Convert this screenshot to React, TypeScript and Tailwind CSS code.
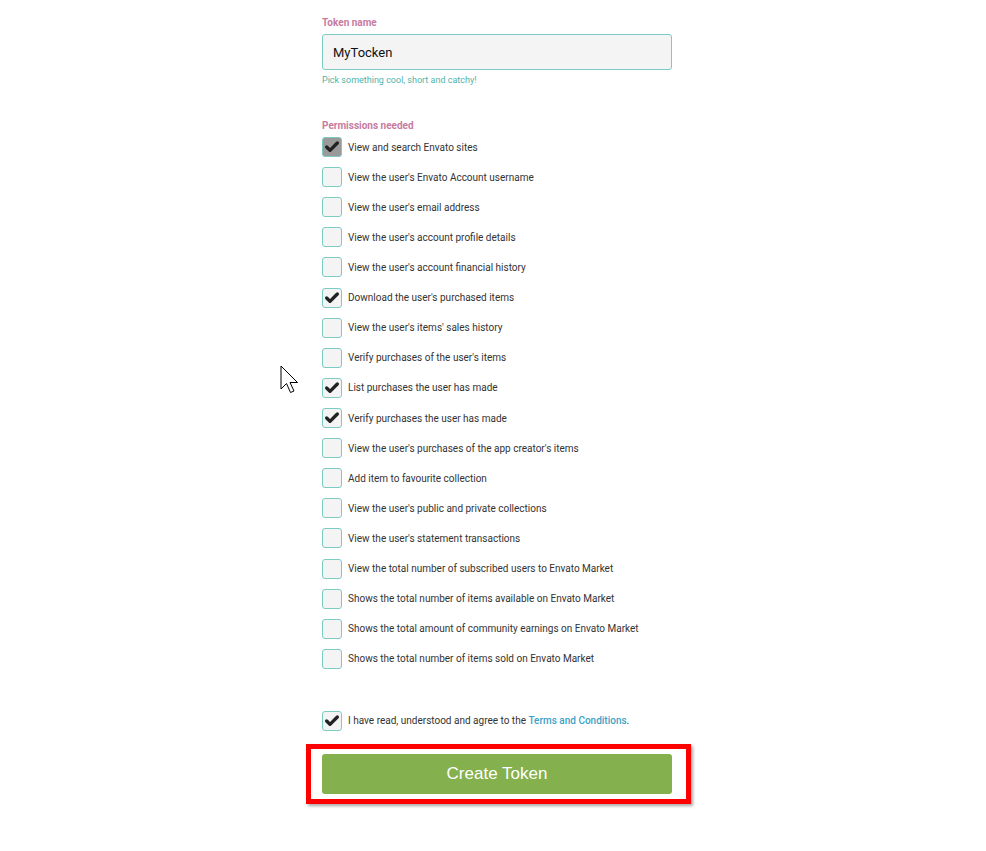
import { Check } from 'lucide-react';

const permissions: { label: string; checked?: boolean; disabled?: boolean }[] = [
  { label: 'View and search Envato sites', checked: true, disabled: true },
  { label: "View the user's Envato Account username" },
  { label: "View the user's email address" },
  { label: "View the user's account profile details" },
  { label: "View the user's account financial history" },
  { label: "Download the user's purchased items", checked: true },
  { label: "View the user's items' sales history" },
  { label: "Verify purchases of the user's items" },
  { label: 'List purchases the user has made', checked: true },
  { label: 'Verify purchases the user has made', checked: true },
  { label: "View the user's purchases of the app creator's items" },
  { label: 'Add item to favourite collection' },
  { label: "View the user's public and private collections" },
  { label: "View the user's statement transactions" },
  { label: 'View the total number of subscribed users to Envato Market' },
  { label: 'Shows the total number of items available on Envato Market' },
  { label: 'Shows the total amount of community earnings on Envato Market' },
  { label: 'Shows the total number of items sold on Envato Market' },
];

function Box({ checked, disabled }: { checked?: boolean; disabled?: boolean }) {
  return (
    <span
      className={`flex h-5 w-5 shrink-0 items-center justify-center rounded-[3px] border ${
        disabled ? 'border-[#7cc9c2] bg-[#9a9a9a]' : 'border-[#7cccc4] bg-[#f4f4f4]'
      }`}
    >
      {checked ? <Check className="h-4 w-4 text-[#222]" strokeWidth={5} /> : null}
    </span>
  );
}

export default function App() {
  return (
    <div className="relative min-h-[851px] bg-white font-['Roboto',sans-serif] text-[#333]">
      <div className="ml-[322px] w-[350px] pt-[16px]">
        <label className="block text-[10px] leading-[14px] font-bold text-[#c87b9f]">Token name</label>
        <input
          defaultValue="MyTocken"
          className="mt-[4px] block h-[36px] w-full rounded-[3px] border border-[#7cccc4] bg-[#f4f4f4] px-[10px] text-[13px] text-[#111] outline-none"
        />
        <p className="mt-[3px] text-[9px] leading-[14px] text-[#4fb3a9]">Pick something cool, short and catchy!</p>

        <p className="mt-[32px] text-[10px] leading-[14px] font-bold text-[#c87b9f]">Permissions needed</p>
        <ul className="mt-[-1px]">
          {permissions.map((p) => (
            <li key={p.label} className="flex h-[30.12px] items-center gap-[6px]">
              <Box checked={p.checked} disabled={p.disabled} />
              <span className="text-[10px] text-[#333]">{p.label}</span>
            </li>
          ))}
        </ul>

        <div className="mt-[32px] flex h-[30px] items-center gap-[6px]">
          <Box checked />
          <span className="text-[10px] text-[#333]">
            I have read, understood and agree to the{' '}
            <a className="font-medium text-[#3d9fc6]">Terms and Conditions</a>.
          </span>
        </div>

        <div className="mt-[8px] -ml-[16px] w-[385px] border-[5px] border-[#ff0000] pt-[5px] pb-[5px] pl-[11px] pr-[14px] shadow-[2px_2px_3px_rgba(0,0,0,0.35)]">
          <button
            type="button"
            className="flex h-[40px] w-full items-center justify-center rounded-[3px] bg-[#84b04e] font-['Liberation_Sans',Arial,sans-serif] text-[17px] text-white"
          >
            Create Token
          </button>
        </div>
      </div>

      <svg className="absolute left-[280px] top-[365px]" width="20" height="32" viewBox="0 0 20 32">
        <path
          d="M1 1 L1 24 L6.5 18.5 L10.5 27.5 L14 26 L10 17.5 L17.5 17.5 Z"
          fill="#fff"
          stroke="#000"
          strokeWidth="1"
          strokeLinejoin="miter"
        />
      </svg>
    </div>
  );
}
